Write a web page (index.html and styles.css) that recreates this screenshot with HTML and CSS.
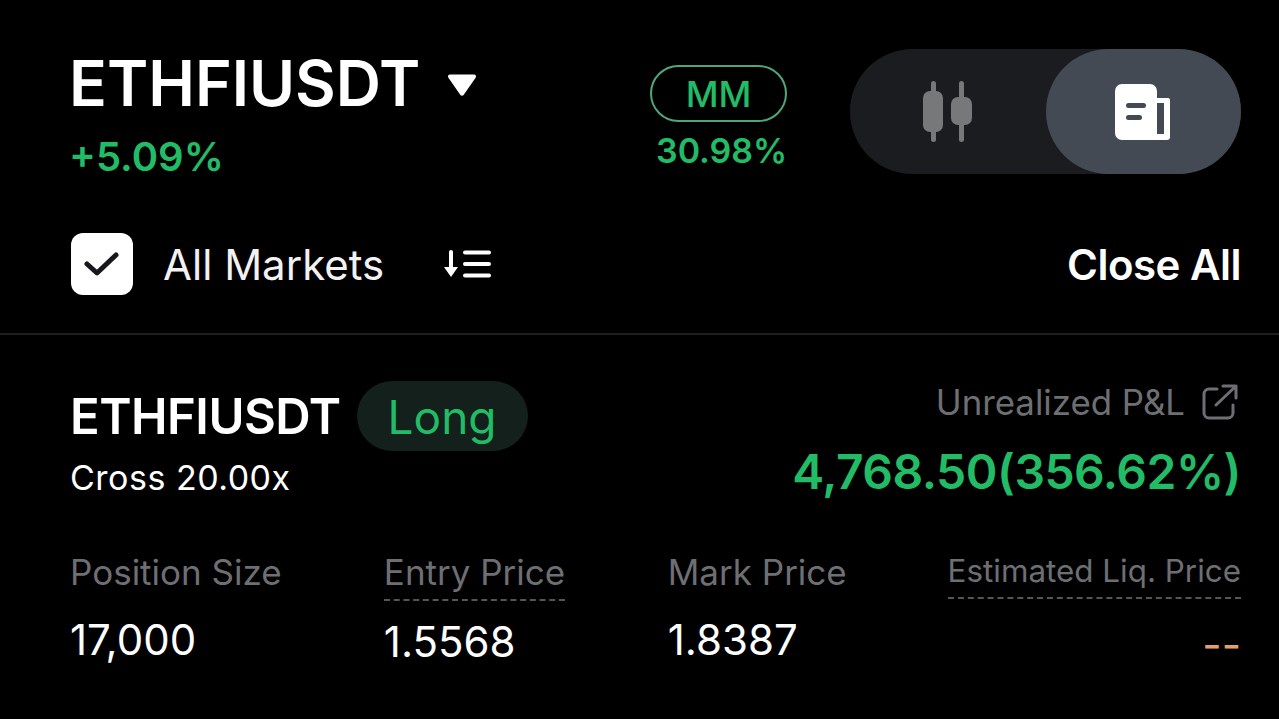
FILE: index.html
```html
<!DOCTYPE html>
<html lang="en">

<head>
    <meta charset="UTF-8">
    <meta name="viewport" content="width=device-width, initial-scale=1.0">
    <title>ETHFIUSDT Position</title>
    <link rel="stylesheet" href="styles.css">
</head>

<body>
    <div class="top">
        <div class="top-head">
            <div class="symbol-box">
                <div class="symbol">
                    <h1>ETHFIUSDT</h1>
                    <svg class="caret" width="30" height="24" viewBox="0 0 30 24"><path d="M3 1.500h24a2 2 0 0 1 1.600 3.200L16.600 22a2 2 0 0 1-3.200 0L1.400 4.700A2 2 0 0 1 3 1.500z" fill="#fff"/></svg>
                </div>
                <div class="change">+5.09%</div>
            </div>
            <div class="mm-box">
                <div class="mm-tag">MM</div>
                <div class="mm-value">30.98%</div>
            </div>
            <div class="view-toggle">
                <div class="toggle-item">
                    <svg width="52" height="62" viewBox="0 0 52 62" fill="#77787a">
                        <rect x="9" y="0" width="5" height="61" rx="2.500"/>
                        <rect x="1" y="10" width="20" height="41" rx="7"/>
                        <rect x="37" y="0" width="5" height="61" rx="2.500"/>
                        <rect x="29" y="16" width="21" height="28" rx="7"/>
                    </svg>
                </div>
                <div class="toggle-item toggle-on">
                    <svg width="56" height="56" viewBox="0 0 56 56">
                        <path fill="#fff" d="M7 0h28a7 7 0 0 1 7 7v7h11a2 2 0 0 1 2 2v37a3 3 0 0 1-3 3H7a7 7 0 0 1-7-7V7a7 7 0 0 1 7-7z"/>
                        <rect x="42" y="19" width="7" height="31" fill="#434a53"/>
                        <rect x="11" y="19" width="20" height="5" rx="2.500" fill="#434a53"/>
                        <rect x="11" y="31" width="16" height="5" rx="2.500" fill="#434a53"/>
                    </svg>
                </div>
            </div>
        </div>
        <div class="filter-row">
            <div class="filter-left">
                <span class="check">
                    <svg width="38" height="30" viewBox="0 0 38 30"><path d="M4 15l10 9L33 6" fill="none" stroke="#16181c" stroke-width="5" stroke-linecap="round" stroke-linejoin="round"/></svg>
                </span>
                <span class="filter-label">All Markets</span>
                <svg class="sort-icon" width="48" height="30" viewBox="0 0 48 30" fill="none" stroke="#fff" stroke-linecap="round">
                    <path d="M7 3v18" stroke-width="4"/>
                    <path d="M0 18h14l-7 10z" fill="#fff" stroke="none"/>
                    <path d="M21 3.500h24M21 15h24M21 26.500h24" stroke-width="4"/>
                </svg>
            </div>
            <div class="close-all">Close All</div>
        </div>
    </div>

    <div class="position">
        <div class="pos-head">
            <div>
                <div class="pos-title">
                    <span class="pos-symbol">ETHFIUSDT</span>
                    <span class="side">Long</span>
                </div>
                <div class="margin-mode">Cross 20.00x</div>
            </div>
            <div class="pnl">
                <div class="pnl-label">
                    <span>Unrealized P&amp;L</span>
                    <svg width="36" height="36" viewBox="0 0 36 36" fill="none" stroke="#6e6f73" stroke-width="3" stroke-linecap="round" stroke-linejoin="round">
                        <path d="M15 5H7a5 5 0 0 0-5 5v19a5 5 0 0 0 5 5h19a5 5 0 0 0 5-5v-8"/>
                        <path d="M14 21L33 3M21 2h13v12"/>
                    </svg>
                </div>
                <div class="pnl-value">4,768.50(356.62%)</div>
            </div>
        </div>
        <div class="stats">
            <div class="stat stat-size">
                <div class="stat-label">Position Size</div>
                <div class="stat-value">17,000</div>
            </div>
            <div class="stat stat-entry">
                <div class="stat-label"><span class="dotted">Entry Price</span></div>
                <div class="stat-value">1.5568</div>
            </div>
            <div class="stat stat-mark">
                <div class="stat-label">Mark Price</div>
                <div class="stat-value">1.8387</div>
            </div>
            <div class="stat stat-liq">
                <div class="stat-label"><span class="dotted small">Estimated Liq. Price</span></div>
                <div class="stat-value empty">--</div>
            </div>
        </div>
    </div>
</body>

</html>
```

FILE: styles.css
```css
* {
    box-sizing: border-box;
}

body {
    font-family: Inter, "Noto Sans", sans-serif;
    margin: 0;
    padding: 0;
    background-color: #000;
    color: #fff;
    height: 719px;
    overflow: hidden;
}

.top {
    padding: 48px 38px 0 71px;
    height: 335px;
    border-bottom: 2px solid #1d1e20;
}

.top-head {
    display: flex;
    align-items: flex-start;
}

.symbol-box {
    width: 579px;
}

.symbol {
    display: flex;
    align-items: center;
    gap: 27px;
    height: 70px;
}

.symbol h1 {
    margin: 0 0 0 -2px;
    font-size: 62.6px;
    font-weight: 600;
    line-height: 70px;
}

.caret {
    margin-top: 3px;
}

.change {
    color: #22bb66;
    font-size: 40px;
    font-weight: 600;
    line-height: 46px;
    margin: 16px 0 0 -2px;
}

.mm-box {
    width: 200px;
    padding-top: 17px;
}

.mm-tag {
    width: 137px;
    height: 57px;
    border: 2px solid #4fa67c;
    border-radius: 29px;
    color: #22bb66;
    font-size: 36px;
    font-weight: 500;
    display: flex;
    align-items: center;
    justify-content: center;
}

.mm-value {
    color: #22bb66;
    font-size: 34px;
    font-weight: 600;
    line-height: 40px;
    margin-top: 9px;
    margin-left: 6px;
}

.view-toggle {
    width: 391px;
    height: 125px;
    margin-left: auto;
    margin-top: 1px;
    display: flex;
    background-color: #1b1c20;
    border-radius: 63px;
}

.toggle-item {
    flex: 1;
    display: flex;
    align-items: center;
    justify-content: center;
    border-radius: 63px;
}

.toggle-on {
    background-color: #434a53;
}

.filter-row {
    display: flex;
    align-items: center;
    justify-content: space-between;
    margin-top: 53px;
}

.filter-left {
    display: flex;
    align-items: center;
}

.check {
    width: 62px;
    height: 62px;
    background-color: #fff;
    border-radius: 12px;
    display: flex;
    align-items: center;
    justify-content: center;
}

.filter-label {
    font-size: 42px;
    margin-left: 30px;
    color: #f2f2f2;
}

.sort-icon {
    margin-left: 60px;
}

.close-all {
    font-size: 42px;
    font-weight: 600;
    letter-spacing: -0.5px;
}

.position {
    padding: 45px 38px 0 70px;
}

.pos-head {
    display: flex;
    justify-content: space-between;
}

.pos-title {
    display: flex;
    align-items: center;
    gap: 16px;
    margin-top: 1px;
}

.pos-symbol {
    font-size: 49px;
    font-weight: 600;
    letter-spacing: -0.5px;
}

.side {
    width: 171px;
    height: 70px;
    background-color: #13201b;
    border-radius: 35px;
    color: #22bb66;
    font-size: 46px;
    padding-top: 2px;
    display: flex;
    align-items: center;
    justify-content: center;
}

.margin-mode {
    font-size: 34px;
    letter-spacing: 0.5px;
    line-height: 40px;
    margin-top: 7px;
}

.pnl {
    text-align: right;
}

.pnl-label {
    display: flex;
    align-items: center;
    justify-content: flex-end;
    gap: 17px;
    color: #6e6f73;
    font-size: 34.8px;
    height: 44px;
    padding-right: 3px;
}

.pnl-value {
    color: #22bb66;
    font-size: 48px;
    font-weight: 600;
    letter-spacing: -0.5px;
    line-height: 60px;
    margin-top: 18px;
}

.stats {
    display: flex;
    margin-top: 49px;
}

.stat-size {
    width: 314px;
}

.stat-entry {
    width: 284px;
}

.stat-mark {
    width: 280px;
}

.stat-liq {
    flex: 1;
}

.stat-label {
    color: #6e6f73;
    font-size: 35px;
    line-height: 42px;
    height: 50px;
    white-space: nowrap;
}

.dotted {
    display: inline-block;
    height: 50px;
    border-bottom: 2px dashed #55565a;
}

.dotted.small {
    font-size: 31.4px;
    line-height: 40px;
    height: 48px;
    vertical-align: top;
}

.stat-value {
    font-size: 42px;
    line-height: 48px;
    margin-top: 15px;
}

.stat-entry .stat-value {
    margin-top: 17px;
}

.stat-liq .stat-value {
    text-align: right;
    margin-top: 20px;
}

.empty {
    color: #e8a06a;
}
```
